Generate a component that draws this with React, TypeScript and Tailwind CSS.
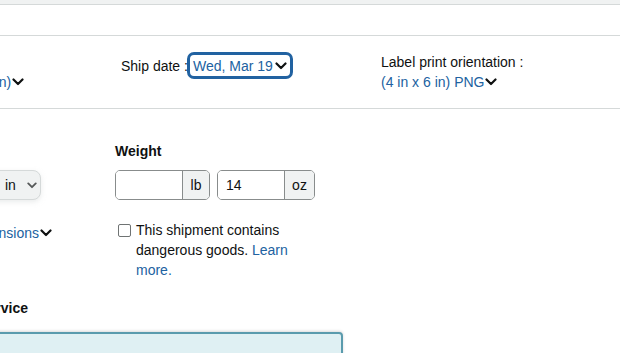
import React from "react";

function Chevron({ className = "" }: { className?: string }) {
  return (
    <svg viewBox="0 0 12 8" className={className} fill="none">
      <polyline points="1.5,1.5 6,6 10.5,1.5" stroke="currentColor" strokeWidth="2.2" strokeLinecap="round" strokeLinejoin="round" />
    </svg>
  );
}

function UnitInput({ value, unit, unitWidth }: { value: string; unit: string; unitWidth: string }) {
  return (
    <div className="flex h-[30px] rounded-[5px] border border-[#888c8c] overflow-hidden">
      <input
        readOnly
        value={value}
        className="w-[66px] px-[8px] text-[14px] text-[#0f1111] outline-none bg-white"
      />
      <span className={`${unitWidth} flex items-center justify-center border-l border-[#888c8c] bg-[#f0f2f2] text-[14px]`}>
        {unit}
      </span>
    </div>
  );
}

export default function App() {
  return (
    <div className="w-[620px] h-[353px] overflow-hidden bg-white text-[#0f1111] font-['Liberation_Sans',Arial,sans-serif] text-[14px] leading-[20px]">
      {/* page header strip */}
      <div className="h-[5px] bg-[#f0f2f2] border-b border-[#d5d9d9]" />
      <div className="h-[31px] border-b border-[#d5d9d9]" />

      {/* label settings row */}
      <div className="h-[73px] border-b border-[#d5d9d9] pt-[16px] flex ml-[-58px]">
        <div className="w-[179px]">
          <div>Size :</div>
          <div className="flex items-center text-[#2162a1]">
            (4 in x 6 in)
            <Chevron className="w-[12px] h-[8px] ml-[1px] text-[#0f1111]" />
          </div>
        </div>
        <div className="w-[260px]">
          <div className="flex items-center">
            <span>Ship date :</span>
            <span className="flex items-center h-[27px] px-[3px] -ml-[1px] border-[3px] border-[#2162a1] rounded-[7px] text-[#2162a1]">
              Wed, Mar 19
              <Chevron className="w-[12px] h-[8px] ml-[2px] text-[#0f1111]" />
            </span>
          </div>
        </div>
        <div>
          <div>Label print orientation :</div>
          <div className="flex items-center text-[#2162a1]">
            (4 in x 6 in) PNG
            <Chevron className="w-[12px] h-[8px] ml-[1px] text-[#0f1111]" />
          </div>
        </div>
      </div>

      {/* package details */}
      <div className="flex pt-[32px] ml-[-300px]">
        <div className="w-[415px] flex flex-col">
          <div className="font-bold">Package dimensions</div>
          <div className="flex justify-end gap-2 pr-[74px] mt-[9px]">
            <div className="w-[60px] h-[30px] rounded-[8px] border border-[#d5d9d9] bg-[#f0f2f2] flex items-center pl-[23px] gap-[11px] shadow-[0_2px_5px_rgba(213,217,217,0.5)]">
              in
              <Chevron className="w-[10px] h-[7px] text-[#565959]" />
            </div>
          </div>
          <div className="flex justify-end pr-[63px] mt-[23px]">
            <span className="flex items-center text-[#2162a1]">
              Saved dimensions
              <Chevron className="w-[12px] h-[8px] ml-[1px] text-[#0f1111]" />
            </span>
          </div>
        </div>

        <div className="w-[200px]">
          <div className="font-bold">Weight</div>
          <div className="flex gap-[7px] mt-[9px]">
            <UnitInput value="" unit="lb" unitWidth="w-[27px]" />
            <UnitInput value="14" unit="oz" unitWidth="w-[30px]" />
          </div>
          <label className="flex mt-[20px]">
            <span className="w-[13px] h-[13px] mt-[4px] ml-[3px] mr-[5px] rounded-[2px] border border-[#6f7373] bg-white shrink-0" />
            <span className="w-[177px]">
              This shipment contains dangerous goods.{" "}
              <span className="text-[#2162a1]">Learn more.</span>
            </span>
          </label>
        </div>
      </div>

      {/* shipping service */}
      <div className="ml-[-84px] mt-[18px]">
        <div className="font-bold">Shipping service</div>
        <div className="w-[427px] h-[60px] mt-[14px] border-2 border-[#5a9bad] bg-[#dff0f3] rounded-[4px] shadow-[0_-1px_3px_rgba(0,0,0,0.15)]" />
      </div>
    </div>
  );
}
